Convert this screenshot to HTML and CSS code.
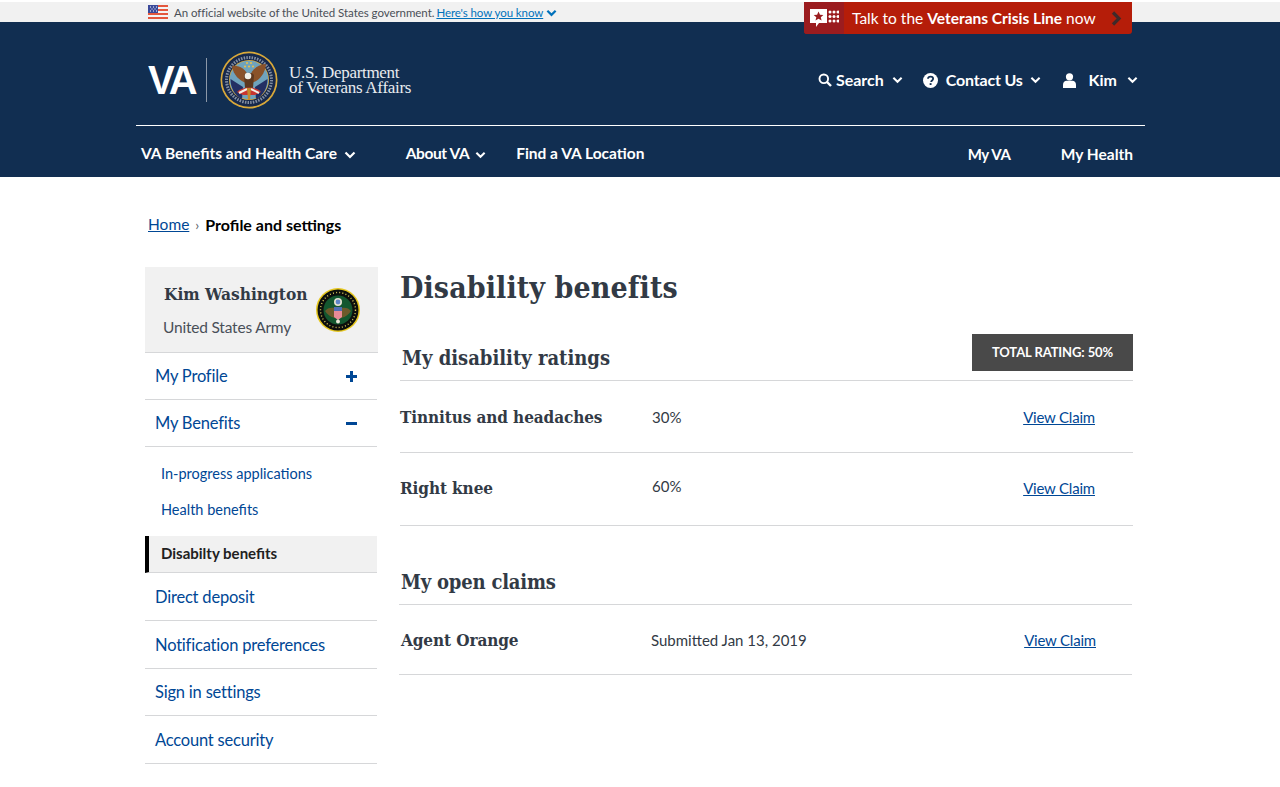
FILE: index.html
```html
<!DOCTYPE html>
<html lang="en">
<head>
    <meta charset="UTF-8">
    <meta name="viewport" content="width=device-width, initial-scale=1.0">
    <title>Disability benefits</title>
    <link rel="stylesheet" href="styles.css">
</head>
<body>
    <div class="gov-banner">
        <svg class="flag" viewBox="0 0 20 14" width="20" height="14">
            <rect width="20" height="14" fill="#f4f4f4"/>
            <rect width="20" height="2" fill="#e4573d"/>
            <rect y="4" width="20" height="2" fill="#e4573d"/>
            <rect y="8" width="20" height="2" fill="#e4573d"/>
            <rect y="12" width="20" height="2" fill="#e4573d"/>
            <rect width="10" height="8" fill="#3b4a9a"/>
            <path d="M2 2h1M5 2h1M8 2h1M3.5 4h1M6.5 4h1M2 6h1M5 6h1M8 6h1" stroke="#fff" stroke-width="1"/>
        </svg>
        <span class="gov-text">An official website of the United States government.</span>
        <a class="gov-link" href="#">Here's how you know</a>
        <svg class="gov-chevron" viewBox="0 0 12 8" width="11" height="8"><path d="M1.500 1.500 6 6l4.500-4.500" fill="none" stroke="#0071bb" stroke-width="2.400"/></svg>
    </div>

    <a class="crisis" href="#">
        <span class="crisis-icon">
            <svg viewBox="0 0 29 19" width="29" height="19">
                <path d="M0 0h17v14H9l-3 4v-4H0z" fill="#fff"/>
                <path d="M8.500 2.500l1.500 3.200 3.400.3-2.600 2.200.8 3.300-3.100-1.800-3 1.800.8-3.300L3.700 6l3.400-.3z" fill="#9b1c1f"/>
                <g fill="#fff">
                    <circle cx="20" cy="3" r="1.500"/><circle cx="24" cy="3" r="1.500"/><circle cx="28" cy="3" r="1.500"/>
                    <circle cx="20" cy="7.500" r="1.500"/><circle cx="24" cy="7.500" r="1.500"/><circle cx="28" cy="7.500" r="1.500"/>
                    <circle cx="20" cy="12" r="1.500"/><circle cx="24" cy="12" r="1.500"/><circle cx="28" cy="12" r="1.500"/>
                </g>
            </svg>
        </span>
        <span class="crisis-text">Talk to the <b>Veterans Crisis Line</b> now</span>
        <svg class="crisis-arrow" viewBox="0 0 11 15" width="11" height="15"><path d="M2 1.500 8 7.500l-6 6" fill="none" stroke="#3f2a2a" stroke-width="3.200"/></svg>
    </a>

    <header class="site-header">
        <div class="header-inner">
            <div class="brand-row">
                <div class="brand">
                    <span class="va-mark">VA</span>
                    <span class="brand-divider"></span>
                    <svg class="va-seal" viewBox="0 0 58 58" width="58" height="58">
                        <circle cx="29" cy="29" r="28.500" fill="#d9a93a"/>
                        <circle cx="29" cy="29" r="26.800" fill="#16284c"/>
                        <circle cx="29" cy="29" r="22.500" fill="none" stroke="#cfd6de" stroke-width="3" stroke-dasharray="1.500 1.200" opacity=".6"/>
                        <circle cx="29" cy="29" r="20" fill="#d9a93a"/>
                        <circle cx="29" cy="29" r="19.300" fill="#6fa3bd"/>
                        <path d="M10.500 28 23 36 22 48C15 45 10.500 37 10.500 28z" fill="#232f63"/>
                        <path d="M47.500 28 35 36 36 48C43 45 47.500 37 47.500 28z" fill="#232f63"/>
                        <path d="M26 32C20 30 13 24 12 15 19 14 26 18 28 25z" fill="#8a5229"/>
                        <path d="M32 32C38 30 45 24 46 13 39 13 32 18 30 25z" fill="#8a5229"/>
                        <path d="M24 24C26 21 32 21 34 24L33 37H25z" fill="#5d381f"/>
                        <circle cx="28" cy="25" r="3.300" fill="#f2efe6"/>
                        <path d="M17 41C22 35 36 35 41 41L35 44H23z" fill="#c8352f"/>
                        <path d="M19 42 27 38M39 42 31 38" stroke="#f2efe6" stroke-width="2"/>
                        <path d="M27 37h4l-1 12h-2z" fill="#c48a2c"/>
                        <g fill="#e6c04f">
                            <circle cx="27" cy="12" r="1.100"/><circle cx="31" cy="12" r="1.100"/>
                            <circle cx="25" cy="15.500" r="1.100"/><circle cx="29" cy="15.500" r="1.100"/><circle cx="33" cy="15.500" r="1.100"/>
                        </g>
                    </svg>
                    <span class="brand-name">U.S. Department<br>of Veterans Affairs</span>
                </div>
                <div class="utility">
                    <a class="utility-item" href="#">
                        <svg viewBox="0 0 14 14" width="14" height="14"><circle cx="5.800" cy="5.800" r="4.300" fill="none" stroke="#fff" stroke-width="1.900"/><path d="M9 9l4 4" stroke="#fff" stroke-width="2.400"/></svg>
                        <span class="search-label">Search</span>
                        <svg class="chevron" viewBox="0 0 12 8" width="11" height="8"><path d="M1.500 1.500 6 6l4.500-4.500" fill="none" stroke="#fff" stroke-width="2.200"/></svg>
                    </a>
                    <a class="utility-item" href="#">
                        <svg viewBox="0 0 16 16" width="15" height="15"><circle cx="8" cy="8" r="8" fill="#fff"/><path d="M5.300 6.200C5.400 4.600 6.600 3.800 8.100 3.800c1.500 0 2.700.9 2.700 2.200 0 2-2.100 1.900-2.100 3.600" fill="none" stroke="#112e51" stroke-width="1.900"/><rect x="7.100" y="10.800" width="2" height="2" fill="#112e51"/></svg>
                        <span class="contact-label">Contact Us</span>
                        <svg class="chevron" viewBox="0 0 12 8" width="11" height="8"><path d="M1.500 1.500 6 6l4.500-4.500" fill="none" stroke="#fff" stroke-width="2.200"/></svg>
                    </a>
                    <a class="utility-item user-item" href="#">
                        <svg viewBox="0 0 13 15" width="13" height="15"><circle cx="6.500" cy="3.800" r="3.600" fill="#fff"/><path d="M0 15v-3.500C0 9.200 1.800 7.800 3.500 7.800h6c1.700 0 3.500 1.400 3.500 3.700V15z" fill="#fff"/></svg>
                        <span class="user-label">Kim</span>
                        <svg class="chevron" viewBox="0 0 12 8" width="11" height="8"><path d="M1.500 1.500 6 6l4.500-4.500" fill="none" stroke="#fff" stroke-width="2.200"/></svg>
                    </a>
                </div>
            </div>
            <nav class="main-nav">
                <a class="nav-benefits" href="#">VA Benefits and Health Care
                    <svg class="chevron" viewBox="0 0 12 8" width="12" height="8"><path d="M1.500 1.500 6 6l4.500-4.500" fill="none" stroke="#fff" stroke-width="2.200"/></svg>
                </a>
                <a class="nav-about" href="#">About VA
                    <svg class="chevron" viewBox="0 0 12 8" width="11" height="8"><path d="M1.500 1.500 6 6l4.500-4.500" fill="none" stroke="#fff" stroke-width="2.200"/></svg>
                </a>
                <a class="nav-find" href="#">Find a VA Location</a>
                <a class="nav-myva" href="#">My VA</a>
                <a class="nav-health" href="#">My Health</a>
            </nav>
        </div>
    </header>

    <div class="breadcrumbs">
        <a href="#">Home</a>
        <span class="crumb-sep">›</span>
        <strong>Profile and settings</strong>
    </div>

    <main class="page">
        <aside class="sidebar">
            <div class="profile-card">
                <div>
                    <div class="profile-name">Kim Washington</div>
                    <div class="profile-branch">United States Army</div>
                </div>
                <svg class="army-seal" viewBox="0 0 44 44" width="44" height="44">
                    <circle cx="22" cy="22" r="22" fill="#e6c71e"/>
                    <circle cx="22" cy="22" r="20.500" fill="#0c0f0c"/>
                    <circle cx="22" cy="22" r="17.500" fill="none" stroke="#d8c65a" stroke-width="1.400" stroke-dasharray="1 2.200"/>
                    <circle cx="22" cy="22" r="14.500" fill="#14572f"/>
                    <circle cx="22" cy="14" r="4" fill="#e8e4d0"/>
                    <circle cx="22" cy="14" r="2.400" fill="#5f86c9"/>
                    <path d="M19 20C15 19 11 20 9 23c2 3 5 6 10 7zM25 20c4-1 8 0 10 3-2 3-5 6-10 7z" fill="#6d5a2b"/>
                    <rect x="18" y="19" width="8" height="4" fill="#4f6fb5"/>
                    <path d="M18 23h8v6l-4 3-4-3z" fill="#e98b98"/>
                    <circle cx="22" cy="33.500" r="2" fill="#ece9da"/>
                </svg>
            </div>
            <a class="side-link side-toggle" href="#">My Profile
                <svg viewBox="0 0 11 11" width="11" height="11"><path d="M4 0h3v4h4v3H7v4H4V7H0V4h4z" fill="#004795"/></svg>
            </a>
            <a class="side-link side-toggle" href="#">My Benefits
                <svg viewBox="0 0 11 11" width="11" height="11"><rect y="4" width="11" height="3" fill="#004795"/></svg>
            </a>
            <div class="subnav">
                <a class="sub-link" href="#">In-progress applications</a>
                <a class="sub-link" href="#">Health benefits</a>
            </div>
            <div class="sub-active">Disabilty benefits</div>
            <a class="side-link side-tall" href="#">Direct deposit</a>
            <a class="side-link side-tall" href="#">Notification preferences</a>
            <a class="side-link" href="#">Sign in settings</a>
            <a class="side-link side-tall" href="#">Account security</a>
        </aside>

        <section class="content">
            <h1>Disability benefits</h1>
            <div class="ratings">
                <div class="section-head">
                    <h2>My disability ratings</h2>
                    <span class="total">TOTAL RATING: 50%</span>
                </div>
                <div class="row">
                    <h3>Tinnitus and headaches</h3>
                    <span>30%</span>
                    <a href="#">View Claim</a>
                </div>
                <div class="row row-knee">
                    <h3>Right knee</h3>
                    <span>60%</span>
                    <a href="#">View Claim</a>
                </div>
            </div>
            <div class="claims">
                <div class="section-head">
                    <h2>My open claims</h2>
                </div>
                <div class="row">
                    <h3>Agent Orange</h3>
                    <span>Submitted Jan 13, 2019</span>
                    <a href="#">View Claim</a>
                </div>
            </div>
        </section>
    </main>
</body>
</html>
```

FILE: styles.css
```css
body {
    font-family: Lato, "Open Sans", sans-serif;
    color: #323a45;
    margin: 0;
    padding: 0;
    background: #fff;
    position: relative;
}
a {
    color: #004795;
}
h1, h2, h3 {
    font-family: "DejaVu Serif Condensed", "DejaVu Serif", serif;
    font-weight: 700;
    color: #323a45;
    margin: 0;
}

/* top banner */
.gov-banner {
    display: flex;
    align-items: center;
    height: 20px;
    margin-top: 2px;
    padding-left: 148px;
    background: #f1f1f1;
    font-size: 11.500px;
}
.flag {
    margin-right: 6px;
}
.gov-text {
    color: #4a4f57;
    margin-right: 2px;
    letter-spacing: -0.05px;
}
.gov-link {
    color: #0071bb;
    letter-spacing: -0.08px;
}
.gov-chevron {
    margin: 2px 0 0 3px;
}
.crisis {
    position: absolute;
    top: 2px;
    left: 804px;
    width: 328px;
    height: 32px;
    display: flex;
    align-items: center;
    background: #b51d09;
    border-radius: 0 0 3px 3px;
    color: #fff;
    text-decoration: none;
    font-size: 15.500px;
    white-space: nowrap;
}
.crisis-icon {
    display: flex;
    align-items: center;
    justify-content: center;
    width: 40px;
    height: 32px;
    background: #9b1c1f;
    border-radius: 0 0 0 3px;
}
.crisis-text {
    margin-left: 8px;
    flex: 1;
}
.crisis-arrow {
    margin-right: 10px;
}

/* header */
.site-header {
    background: #112e51;
    height: 155px;
}
.header-inner {
    width: 1009px;
    margin-left: 136px;
}
.brand-row {
    display: flex;
    justify-content: space-between;
    align-items: flex-start;
    height: 103px;
    border-bottom: 1px solid #fff;
}
.brand {
    display: flex;
    align-items: center;
    margin: 29px 0 0 12px;
    height: 58px;
}
.va-mark {
    font-family: "Liberation Sans", Arial, sans-serif;
    font-weight: 700;
    font-size: 40px;
    letter-spacing: -3px;
    color: #fff;
    width: 58px;
}
.brand-divider {
    width: 1px;
    height: 44px;
    background: #8c98a8;
    margin-right: 13px;
}
.brand-name {
    font-family: "Liberation Serif", serif;
    font-size: 17px;
    letter-spacing: -0.3px;
    line-height: 15px;
    color: #e8ebef;
    margin-left: 11px;
}
.utility {
    display: flex;
    margin: 49px 7px 0 0;
}
.utility-item {
    display: flex;
    align-items: center;
    color: #fff;
    font-weight: 700;
    font-size: 16px;
    line-height: 18px;
    text-decoration: none;
}
.utility-item + .utility-item {
    margin-left: 20px;
}
.utility-item.user-item {
    margin-left: 22px;
}
.search-label {
    margin: 0 5px 0 4px;
}
.contact-label {
    margin: 0 4px 0 8px;
    letter-spacing: -0.2px;
}
.user-label {
    margin: 0 7px 0 13px;
}
.main-nav {
    display: flex;
    align-items: center;
    height: 51px;
    box-sizing: border-box;
    padding: 2px 0 0 5px;
}
.main-nav a {
    color: #fff;
    font-weight: 700;
    font-size: 15.500px;
    text-decoration: none;
}
.nav-benefits {
    margin-right: 50px;
}
.nav-about {
    margin-right: 30px;
    letter-spacing: -0.4px;
}
.nav-find {
    margin-right: auto;
}
.main-nav .nav-myva {
    margin: 2px 50px 0 0;
    font-size: 15px;
    letter-spacing: -0.3px;
}
.nav-health {
    margin: 2px 12px 0 0;
}
.chevron {
    margin-left: 3px;
}

/* breadcrumbs */
.breadcrumbs {
    display: flex;
    align-items: center;
    gap: 6px;
    margin: 36px 0 0 148px;
    height: 22px;
    font-size: 15.500px;
}
.breadcrumbs strong {
    color: #000;
    font-size: 16px;
}
.crumb-sep {
    color: #5b616b;
    font-size: 14px;
}

/* layout */
.page {
    display: flex;
    margin: 32px 0 0 145px;
    width: 988px;
}
.sidebar {
    width: 232px;
    flex: none;
}
.content {
    margin-left: 23px;
    flex: 1;
}

/* sidebar */
.profile-card {
    display: flex;
    justify-content: space-between;
    align-items: flex-start;
    width: 233px;
    height: 86px;
    box-sizing: border-box;
    padding: 15px 18px 0 18px;
    background: #f1f1f1;
    border-bottom: 1px solid #d6d7d9;
}
.profile-name {
    font-family: "DejaVu Serif Condensed", "DejaVu Serif", serif;
    font-weight: 700;
    font-size: 17.200px;
    line-height: 24px;
    margin-left: 1px;
}
.profile-branch {
    font-size: 15.500px;
    letter-spacing: -0.2px;
    line-height: 22px;
    margin-top: 10px;
    color: #494f58;
}
.army-seal {
    margin-top: 6px;
}
.side-link {
    display: flex;
    align-items: center;
    justify-content: space-between;
    height: 47px;
    box-sizing: border-box;
    padding: 0 20px 0 10px;
    border-bottom: 1px solid #d6d7d9;
    font-size: 16.500px;
    letter-spacing: -0.2px;
    text-decoration: none;
}
.side-tall {
    height: 48px;
}
.side-toggle svg {
    flex: none;
}
.subnav {
    display: flex;
    flex-direction: column;
    gap: 15px;
    padding: 16px 0 16px 16px;
}
.sub-link {
    font-size: 14.500px;
    line-height: 21px;
    text-decoration: none;
}
.sub-active {
    height: 37px;
    box-sizing: border-box;
    padding: 7px 0 0 12px;
    background: #f1f1f1;
    border-left: 4px solid #000;
    border-bottom: 1px solid #d6d7d9;
    font-weight: 700;
    font-size: 15px;
    line-height: 21px;
    color: #212121;
}

/* content */
h1 {
    font-size: 30px;
    line-height: 42px;
    letter-spacing: 0.1px;
}
.section-head {
    display: flex;
    justify-content: space-between;
    align-items: flex-end;
    box-sizing: border-box;
    padding-left: 2px;
    border-bottom: 1px solid #d6d7d9;
}
.ratings .section-head {
    height: 72px;
    padding-bottom: 9px;
}
.ratings h2 {
    margin-bottom: -1px;
}
h2 {
    font-size: 20px;
    line-height: 28px;
}
.claims h2 {
    letter-spacing: -0.2px;
}
.total {
    display: block;
    width: 161px;
    height: 37px;
    line-height: 37px;
    text-align: center;
    background: #494949;
    color: #fff;
    font-weight: 700;
    font-size: 13px;
    letter-spacing: -0.1px;
}
.row {
    display: grid;
    grid-template-columns: 252px 1fr auto;
    align-items: center;
    height: 72px;
    padding-right: 38px;
    box-sizing: border-box;
    border-bottom: 1px solid #d6d7d9;
    font-size: 15px;
}
.row a {
    letter-spacing: -0.2px;
}
.row-knee {
    height: 73px;
    padding-bottom: 3px;
}
.row-knee span {
    margin-bottom: 4px;
}
h3 {
    font-size: 17px;
    letter-spacing: -0.1px;
}
.claims {
    margin: 31px 1px 0 -1px;
}
.claims .section-head {
    height: 48px;
    padding-bottom: 8px;
}
.claims .row {
    height: 70px;
    padding-right: 36px;
}
.claims h3 {
    margin-left: 2px;
}
```
